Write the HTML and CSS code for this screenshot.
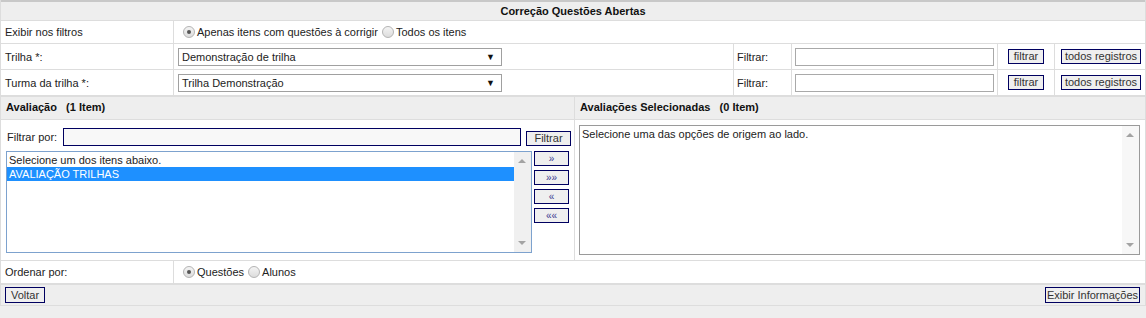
FILE: index.html
```html
<!DOCTYPE html>
<html lang="pt-BR">
<head>
    <meta charset="UTF-8">
    <title>Correção Questões Abertas</title>
    <link rel="stylesheet" href="styles.css">
</head>
<body>
<div class="page">

    <div class="title">Correção Questões Abertas</div>

    <div class="row row--short">
        <div class="cell cell--label">Exibir nos filtros</div>
        <div class="cell cell--wide">
            <span class="radio radio--on"></span><span class="radio-text">Apenas itens com questões à corrigir</span>
            <span class="radio"></span><span class="radio-text">Todos os itens</span>
        </div>
    </div>

    <div class="row">
        <div class="cell cell--label">Trilha *:</div>
        <div class="cell">
            <div class="select">Demonstração de trilha<span class="select__arrow">&#9660;</span></div>
        </div>
        <div class="cell cell--filter">Filtrar:</div>
        <div class="cell"><input class="text-input" type="text"></div>
        <div class="cell"><button class="btn btn--filtrar">filtrar</button></div>
        <div class="cell"><button class="btn btn--todos">todos registros</button></div>
    </div>

    <div class="row row--last">
        <div class="cell cell--label">Turma da trilha *:</div>
        <div class="cell">
            <div class="select">Trilha Demonstração<span class="select__arrow">&#9660;</span></div>
        </div>
        <div class="cell cell--filter">Filtrar:</div>
        <div class="cell"><input class="text-input" type="text"></div>
        <div class="cell"><button class="btn btn--filtrar">filtrar</button></div>
        <div class="cell"><button class="btn btn--todos">todos registros</button></div>
    </div>

    <div class="panels">
        <div class="panel panel--left">
            <div class="panel__head">Avaliação &nbsp; (1 Item)</div>
            <div class="panel__body">
                <div class="search">
                    <span class="search__label">Filtrar por:</span>
                    <input class="search__input" type="text">
                    <button class="btn btn--search">Filtrar</button>
                </div>
                <div class="picker">
                    <div class="listbox">
                        <ul class="listbox__items">
                            <li>Selecione um dos itens abaixo.</li>
                            <li class="is-selected">AVALIAÇÃO TRILHAS</li>
                        </ul>
                        <div class="scrollbar">
                            <span class="scrollbar__up"></span>
                            <span class="scrollbar__down"></span>
                        </div>
                    </div>
                    <div class="movers">
                        <button class="btn btn--move">»</button>
                        <button class="btn btn--move">»»</button>
                        <button class="btn btn--move">«</button>
                        <button class="btn btn--move">««</button>
                    </div>
                </div>
            </div>
        </div>
        <div class="panel panel--right">
            <div class="panel__head">Avaliações Selecionadas &nbsp; (0 Item)</div>
            <div class="panel__body">
                <div class="selected-box">
                    <div class="selected-box__text">Selecione uma das opções de origem ao lado.</div>
                    <div class="scrollbar scrollbar--light">
                        <span class="scrollbar__up"></span>
                        <span class="scrollbar__down"></span>
                    </div>
                </div>
            </div>
        </div>
    </div>

    <div class="row row--short">
        <div class="cell cell--label">Ordenar por:</div>
        <div class="cell cell--wide">
            <span class="radio radio--on"></span><span class="radio-text">Questões</span>
            <span class="radio"></span><span class="radio-text">Alunos</span>
        </div>
    </div>

    <div class="footer">
        <button class="btn btn--voltar">Voltar</button>
        <button class="btn btn--info">Exibir Informações</button>
    </div>

</div>
</body>
</html>
```

FILE: styles.css
```css
* {
    box-sizing: border-box;
    margin: 0;
    padding: 0;
}
body {
    font-family: "Liberation Sans", Arial, sans-serif;
    font-size: 11px;
    color: #222;
    background: #eee;
}
.page {
    width: 1146px;
    border-left: 1px solid #ddd;
    border-right: 1px solid #ddd;
    background: #fff;
}

/* titulo */
.title {
    height: 21px;
    border-top: 2px solid #c8c8c8;
    border-bottom: 1px solid #ddd;
    background: #eee;
    font-weight: bold;
    text-align: center;
    line-height: 18px;
    color: #111;
}

/* linhas do formulario */
.row {
    display: grid;
    grid-template-columns: 173px 560px 58px 206px 57px 1fr;
    height: 26px;
    border-bottom: 1px solid #ddd;
}
.row--short {
    grid-template-columns: 173px 1fr;
    height: 23px;
}
.row--last {
    height: 27px;
    border-bottom-width: 2px;
}
.cell {
    display: flex;
    align-items: center;
    border-right: 1px solid #ddd;
}
.cell:last-child {
    border-right: 0;
}
.cell--label {
    padding-left: 4px;
}
.cell--wide {
    padding-left: 9px;
}
.cell--filter {
    padding-left: 3px;
}

.radio {
    display: inline-block;
    width: 12px;
    height: 12px;
    border: 1px solid #b4b4b4;
    border-radius: 50%;
    background: linear-gradient(#f4f4f4, #dcdcdc);
    position: relative;
    margin-right: 2px;
}
.radio--on::after {
    content: "";
    position: absolute;
    left: 3px;
    top: 3px;
    width: 4px;
    height: 4px;
    border-radius: 50%;
    background: #555;
}
.radio-text {
    margin-right: 4px;
}

.select {
    width: 324px;
    height: 18px;
    margin-left: 4px;
    border: 1px solid #a0a0a0;
    padding-left: 3px;
    line-height: 16px;
    position: relative;
    background: #fff;
}
.select__arrow {
    position: absolute;
    right: 6px;
    top: 0;
    font-size: 9px;
    color: #111;
}

.text-input {
    width: 199px;
    height: 18px;
    margin-left: 3px;
    border: 1px solid #a9a9a9;
    background: #fff;
}

.btn {
    font-family: "Liberation Sans", Arial, sans-serif;
    font-size: 11px;
    color: #333;
    background: #efefef;
    border: 1px solid #000060;
    height: 15px;
    line-height: 13px;
    cursor: pointer;
}
.btn--filtrar {
    width: 36px;
    margin-left: 10px;
}
.btn--todos {
    width: 80px;
    margin-left: 6px;
}

/* paineis */
.panels {
    display: grid;
    grid-template-columns: 574px 1fr;
    border-bottom: 1px solid #ddd;
}
.panel--left {
    border-right: 1px solid #ddd;
}
.panel__head {
    height: 23px;
    background: #eee;
    border-bottom: 1px solid #ddd;
    padding-left: 5px;
    font-weight: bold;
    line-height: 21px;
    color: #111;
}
.panel__body {
    height: 140px;
}
.panel--left .panel__body {
    padding: 8px 0 0 5px;
}
.panel--right .panel__body {
    padding: 5px 0 0 4px;
}

.search {
    display: flex;
    align-items: center;
    height: 18px;
}
.search__label {
    width: 57px;
    padding-left: 1px;
}
.search__input {
    width: 458px;
    height: 18px;
    border: 1px solid #000060;
    background: #f8f8f8;
}
.btn--search {
    width: 45px;
    margin-left: 5px;
    margin-top: 2px;
}

.picker {
    display: flex;
    gap: 2px;
    margin-top: 5px;
}
.listbox {
    width: 526px;
    height: 102px;
    border: 1px solid #7da2ce;
    display: flex;
    background: #fff;
}
.listbox__items {
    list-style: none;
    flex: 1;
    padding-top: 1px;
}
.listbox__items li {
    height: 14px;
    line-height: 14px;
    padding-left: 2px;
}
.listbox__items li.is-selected {
    background: #1e90ff;
    color: #fff;
}
.scrollbar {
    width: 17px;
    background: #f0f0f0;
    position: relative;
}
.scrollbar--light {
    background: #f7f7f7;
}
.scrollbar__up,
.scrollbar__down {
    position: absolute;
    left: 4px;
    width: 0;
    height: 0;
    border-left: 4px solid transparent;
    border-right: 4px solid transparent;
}
.scrollbar__up {
    top: 7px;
    border-bottom: 4px solid #a3a3a3;
}
.scrollbar__down {
    bottom: 7px;
    border-top: 4px solid #a3a3a3;
}

.movers {
    display: flex;
    flex-direction: column;
    gap: 4px;
}
.btn--move {
    width: 35px;
    height: 15px;
    color: #3a3a90;
    font-size: 10px;
}

.selected-box {
    width: 561px;
    height: 130px;
    border: 1px solid #9a9a9a;
    display: flex;
    background: #fff;
}
.selected-box__text {
    flex: 1;
    padding: 2px 0 0 2px;
}

/* rodape */
.footer {
    display: flex;
    justify-content: space-between;
    align-items: center;
    height: 22px;
    padding: 0 5px 0 4px;
    background: #eee;
    border-bottom: 1px solid #ddd;
    border-top: 1px solid #ddd;
}
.btn--voltar {
    width: 40px;
    height: 16px;
}
.btn--info {
    width: 95px;
    height: 16px;
}
```
